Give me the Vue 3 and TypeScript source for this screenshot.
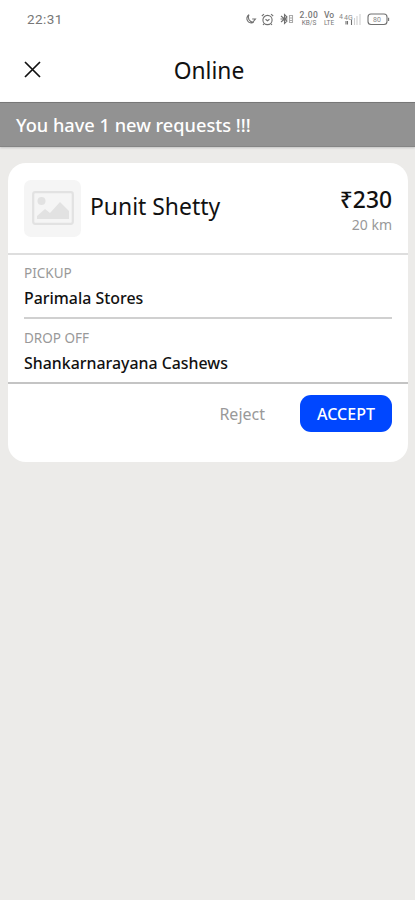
<script setup lang="ts">
interface Stop {
  label: string
  place: string
}

const customer = 'Punit Shetty'
const fare = '₹230'
const distance = '20 km'
const requestCount = 1
const stops: Stop[] = [
  { label: 'PICKUP', place: 'Parimala Stores' },
  { label: 'DROP OFF', place: 'Shankarnarayana Cashews' },
]
</script>

<template>
  <div class="screen">
    <div class="status">
      <span class="clock">22:31</span>
      <div class="indicators">
        <svg class="moon" width="12" height="12" viewBox="0 0 12 12">
          <path d="M4 1.6A4.4 4.4 0 1 0 8.6 9.2A5 5 0 0 1 4 1.6Z" />
          <path d="M7.2 6h3.2L8 9" />
        </svg>
        <svg class="alarm" width="13" height="13" viewBox="0 0 13 13">
          <circle cx="6.5" cy="7" r="4.6" />
          <path d="M.8 3L3 1.1M12.2 3L10 1.1M4.5 6.2l2 1.6 2-1.6M3 10.8l-1 1.2M10 10.8l1 1.2" />
        </svg>
        <svg class="bluetooth" width="14" height="12" viewBox="0 0 14 12">
          <path d="M1 3l6 5-2.5 2.5V1.5L7 4 1 9M.5 6h7" />
          <path class="soft" d="M9.5 2.5h3v7h-3zM9.5 5h3M9.5 7.5h3" />
        </svg>
        <span class="speed"><b>2.00</b><small>KB/S</small></span>
        <span class="volte"><b>Vo</b><small>LTE</small></span>
        <svg class="signal" width="22" height="13" viewBox="0 0 22 13">
          <text x="0" y="6">4</text>
          <text x="5" y="6.5">4G</text>
          <path d="M7 8v3.5M8.5 8v3.5M12.5 7v5" />
          <path class="faint" d="M15.5 5v7M18 3v9M21 1v11" />
        </svg>
        <svg class="battery" width="23" height="13" viewBox="0 0 23 13">
          <rect x="1" y="1" width="19" height="10.5" rx="3" />
          <path d="M21.6 4.7v3.2" />
          <text x="6" y="8.6">80</text>
        </svg>
      </div>
    </div>

    <header class="header">
      <svg class="close" width="17" height="17" viewBox="0 0 17 17">
        <path d="M1 1l15 15M16 1L1 16" />
      </svg>
      <h1>Online</h1>
    </header>

    <div class="banner"><span>You have {{ requestCount }} new requests !!!</span></div>

    <section class="card">
      <div class="summary">
        <div class="avatar">
          <svg width="42" height="34" viewBox="0 0 42 34">
            <rect x="1.2" y="1.2" width="39.6" height="31.6" rx="2" class="frame" />
            <circle cx="9.5" cy="10" r="4" />
            <path d="M5 28v-3l8-7 5 4 10-11 9 9v8z" />
          </svg>
        </div>
        <span class="name">{{ customer }}</span>
        <div class="price">
          <span class="fare">{{ fare }}</span>
          <span class="distance">{{ distance }}</span>
        </div>
      </div>

      <div class="stops">
        <div v-for="stop in stops" :key="stop.label" class="stop">
          <span class="label">{{ stop.label }}</span>
          <span class="place">{{ stop.place }}</span>
        </div>
      </div>

      <div class="actions">
        <button class="reject" type="button">Reject</button>
        <button class="accept" type="button">ACCEPT</button>
      </div>
    </section>
  </div>
</template>

<style>
body {
  background: #ecebe9;
}
</style>

<style scoped>
.screen {
  box-sizing: border-box;
  width: 100%;
  min-height: 900px;
  background: #ecebe9;
  font-family: "Noto Sans", sans-serif;
  color: #111;
}

.status {
  box-sizing: border-box;
  height: 38px;
  padding: 0 25px 0 27px;
  display: flex;
  align-items: center;
  justify-content: space-between;
  background: #fff;
}

.clock {
  font: 13.5px/18px Roboto, sans-serif;
  letter-spacing: 0.4px;
  color: #777;
}

.indicators {
  display: flex;
  align-items: center;
  font-family: Roboto, sans-serif;
  color: #777;
}

.indicators svg {
  flex: none;
  fill: none;
  stroke: #707070;
  stroke-width: 1.1;
}

.indicators text {
  fill: #888;
  stroke: none;
  font-size: 7px;
}

.alarm {
  margin-left: 4px;
}

.bluetooth {
  margin-left: 6px;
}

.speed,
.volte {
  display: flex;
  flex-direction: column;
  align-items: center;
}

.speed {
  width: 20px;
  margin-left: 5px;
}

.volte {
  width: 10px;
  margin-left: 5px;
}

.speed b,
.volte b {
  font-size: 8.5px;
  line-height: 8px;
  font-weight: 500;
}

.speed b {
  letter-spacing: 0.5px;
}

.speed small,
.volte small {
  font-size: 6.5px;
  line-height: 8px;
}

.signal {
  margin-left: 5px;
}

.indicators .soft {
  stroke: #aaa;
}

.indicators .faint {
  stroke: #d0d0d0;
}

.battery {
  margin-left: 6px;
}

.header {
  box-sizing: border-box;
  height: 64px;
  padding-left: 24px;
  display: grid;
  grid-template-columns: 17px 1fr 38px;
  align-items: center;
  background: #fff;
}

.close {
  margin-top: -1px;
  fill: none;
  stroke: #111;
  stroke-width: 1.7;
}

h1 {
  margin: 1px 0 0;
  font-size: 22.8px;
  line-height: 30px;
  font-weight: 400;
  text-align: center;
}

.banner {
  box-sizing: border-box;
  height: 45px;
  padding-left: 16px;
  display: flex;
  align-items: center;
  background: #929292;
  border-top: 1px solid #777;
  border-bottom: 1px solid #858585;
  box-shadow: 0 1px 2px #c4c4c4;
  color: #fff;
  font-size: 18.2px;
  font-weight: 500;
}

.card {
  box-sizing: border-box;
  height: 299px;
  margin: 16px 7px 0 8px;
  border-radius: 18px;
  background: #fff;
}

.summary {
  box-sizing: border-box;
  height: 92px;
  padding: 0 16px;
  display: flex;
  align-items: center;
  border-bottom: 2px solid #dedede;
}

.avatar {
  width: 57px;
  height: 57px;
  display: grid;
  place-items: center;
  border-radius: 7px;
  background: #f5f5f5;
}

.avatar svg {
  fill: #e2e2e2;
}

.avatar .frame {
  fill: none;
  stroke: #e2e2e2;
  stroke-width: 2.2;
}

.name {
  margin: 0 0 2px 9px;
  font-size: 22.9px;
  line-height: 32px;
}

.price {
  margin-left: auto;
  margin-top: 5px;
  display: flex;
  flex-direction: column;
  align-items: flex-end;
}

.fare {
  font-size: 22.8px;
  line-height: 28px;
  font-weight: 500;
}

.distance {
  font-size: 14px;
  line-height: 22px;
  color: #999;
}

.stops {
  padding: 0 16px;
  border-bottom: 2px solid #c4c4c4;
}

.stop {
  box-sizing: border-box;
  height: 62px;
  padding-top: 7px;
  display: flex;
  flex-direction: column;
}

.stop + .stop {
  height: 65px;
  padding-top: 8px;
  border-top: 2px solid #d0d0d0;
}

.label {
  font-size: 13.5px;
  line-height: 22px;
  color: #999;
}

.place {
  font-size: 15.9px;
  line-height: 28px;
  font-weight: 500;
}

.actions {
  padding: 11px 16px 0;
  display: flex;
  justify-content: flex-end;
}

button {
  height: 37px;
  padding: 0;
  border: 0;
  background: none;
  font-family: inherit;
  font-size: 16px;
}

.reject {
  margin-right: 35px;
  color: #999;
}

.accept {
  width: 92px;
  border-radius: 11px;
  background: #0047ff;
  color: #fff;
  font-weight: 500;
}
</style>
